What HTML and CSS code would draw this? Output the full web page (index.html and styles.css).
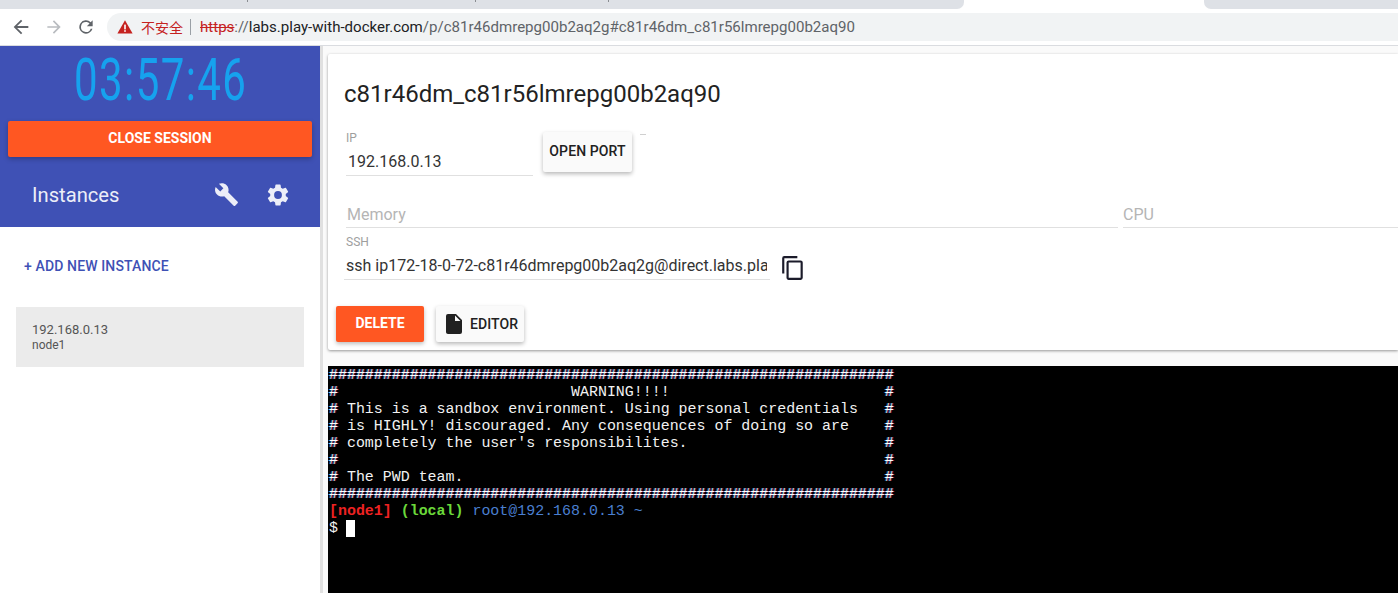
FILE: index.html
```html
<!DOCTYPE html>
<html lang="en">
<head>
<meta charset="utf-8">
<title>Play with Docker</title>
<link rel="stylesheet" href="styles.css">
</head>
<body>
<header class="chrome">
  <div class="tabstrip">
    <div class="tab-gap"></div>
    <div class="tab-active"></div>
    <div class="tab-next"></div>
  </div>
  <div class="toolbar">
    <svg class="nav" viewBox="0 0 24 24"><path fill="#5f6368" d="M20 11H7.800l5.600-5.600L12 4l-8 8 8 8 1.400-1.400L7.800 13H20z"/></svg>
    <svg class="nav" viewBox="0 0 24 24"><path fill="#b9bcc0" d="M4 11h12.200l-5.600-5.600L12 4l8 8-8 8-1.400-1.400 5.600-5.600H4z"/></svg>
    <svg class="nav" viewBox="0 0 24 24"><path fill="#5f6368" d="M17.650 6.350A8 8 0 1 0 19.730 14h-2.080A6 6 0 1 1 12 6c1.660 0 3.140.69 4.220 1.780L13 11h7V4z"/></svg>
    <div class="omnibox">
      <svg class="warn" viewBox="0 0 16 16"><path fill="#c5221f" d="M8 1.200 15.600 14.600H.4z"/><rect x="7.200" y="5.600" width="1.600" height="4.800" fill="#fff"/><rect x="7.200" y="11.200" width="1.600" height="1.600" fill="#fff"/></svg>
      <span class="insecure">不安全</span>
      <span class="sep"></span>
      <span class="url"><s class="scheme">https</s><span class="slashes">://</span>labs.play-with-docker.com<span class="path">/p/c81r46dmrepg00b2aq2g#c81r46dm_c81r56lmrepg00b2aq90</span></span>
    </div>
  </div>
</header>
<div class="app">
  <aside class="sidebar">
    <section class="panel">
      <div class="timer"><span class="timer-text">03:57:46</span></div>
      <button class="btn-close">CLOSE SESSION</button>
      <div class="instances-head">
        <span class="instances-title">Instances</span>
        <svg class="tool" viewBox="0 0 24 24"><path fill="#eceef8" d="M22.700 19l-9.100-9.100c.9-2.300.4-5-1.500-6.900-2-2-5-2.400-7.400-1.300L9 6 6 9 1.600 4.700C.4 7.100.9 10.100 2.900 12.100c1.900 1.900 4.600 2.400 6.900 1.500l9.100 9.100c.4.400 1 .4 1.400 0l2.300-2.300c.5-.4.500-1.100.1-1.400z"/></svg>
        <svg class="gear" viewBox="0 0 24 24"><path fill="#eceef8" d="M19.140 12.940c.04-.3.06-.61.06-.94 0-.32-.02-.64-.07-.94l2.030-1.580a.49.49 0 0 0 .12-.61l-1.920-3.320a.49.49 0 0 0-.59-.22l-2.390.96c-.5-.38-1.030-.7-1.620-.94l-.36-2.540a.48.48 0 0 0-.48-.41h-3.840a.47.47 0 0 0-.47.41l-.36 2.540c-.59.24-1.130.57-1.620.94l-2.390-.96a.48.48 0 0 0-.59.22L2.740 8.870a.47.47 0 0 0 .12.61l2.030 1.580c-.05.3-.09.63-.09.94s.02.64.07.94l-2.030 1.580a.49.49 0 0 0-.12.61l1.920 3.320c.12.22.37.29.59.22l2.390-.96c.5.38 1.030.7 1.620.94l.36 2.540c.05.24.24.41.48.41h3.840c.24 0 .44-.17.47-.41l.36-2.540c.59-.24 1.130-.56 1.620-.94l2.390.96c.22.08.47 0 .59-.22l1.920-3.320a.47.47 0 0 0-.12-.61l-2.010-1.580zM12 15.600A3.610 3.610 0 0 1 8.400 12 3.610 3.610 0 0 1 12 8.400a3.610 3.610 0 0 1 3.600 3.600 3.610 3.610 0 0 1-3.600 3.600z"/></svg>
      </div>
    </section>
    <div class="add-instance">+ ADD NEW INSTANCE</div>
    <div class="instance-item">
      <div class="instance-ip">192.168.0.13</div>
      <div>node1</div>
    </div>
  </aside>
  <main class="content">
    <div class="details">
      <section class="card">
        <h1 class="card-title">c81r46dm_c81r56lmrepg00b2aq90</h1>
        <div class="ip-row">
          <div class="field field-ip">
            <label class="field-label">IP</label>
            <div class="field-value">192.168.0.13</div>
          </div>
          <button class="btn-light btn-port">OPEN PORT</button>
          <span class="dash"></span>
        </div>
        <div class="stats-row">
          <div class="stat stat-mem">Memory</div>
          <div class="stat stat-cpu">CPU</div>
        </div>
        <div class="ssh-row">
          <div class="field field-ssh">
            <label class="field-label">SSH</label>
            <div class="field-value ssh-value">ssh ip172-18-0-72-c81r46dmrepg00b2aq2g@direct.labs.play-with-docker.com</div>
          </div>
          <svg class="copy" viewBox="0 0 24 24"><path fill="#1b1b2a" d="M16 1H4a2 2 0 0 0-2 2v14h2V3h12zm3 4H8a2 2 0 0 0-2 2v14c0 1.100.9 2 2 2h11a2 2 0 0 0 2-2V7a2 2 0 0 0-2-2zm0 16H8V7h11z"/></svg>
        </div>
        <div class="actions">
          <button class="btn-delete">DELETE</button>
          <button class="btn-light btn-editor">
            <svg class="file" viewBox="0 0 24 24"><path fill="#212121" d="M6 2a2 2 0 0 0-2 2v16c0 1.100.9 2 2 2h12a2 2 0 0 0 2-2V8l-6-6zm7 7V3.500L18.500 9z"/></svg>
            EDITOR
          </button>
        </div>
      </section>
    </div>
    <pre class="terminal"><span class="hash">###############################################################</span>
<span class="hash">#</span>                          WARNING!!!!                        <span class="hash">#</span>
<span class="hash">#</span> This is a sandbox environment. Using personal credentials   <span class="hash">#</span>
<span class="hash">#</span> is HIGHLY! discouraged. Any consequences of doing so are    <span class="hash">#</span>
<span class="hash">#</span> completely the user's responsibilites.                      <span class="hash">#</span>
<span class="hash">#</span>                                                             <span class="hash">#</span>
<span class="hash">#</span> The PWD team.                                               <span class="hash">#</span>
<span class="hash">###############################################################</span>
<span class="t-red">[node1]</span> <span class="t-green">(local)</span> <span class="t-blue">root@192.168.0.13 ~</span>
$ <span class="cursor"> </span></pre>
  </main>
</div>
</body>
</html>
```
FILE: styles.css
```css
* { box-sizing: border-box; }
html, body { margin: 0; height: 100%; }
body {
  width: 1398px;
  height: 593px;
  overflow: hidden;
  font-family: Roboto, "Noto Sans", sans-serif;
  background: #fafafa;
  display: flex;
  flex-direction: column;
}
button { font-family: inherit; border: 0; cursor: pointer; }

/* browser chrome */
.chrome { flex: none; height: 46px; background: #fff; border-bottom: 1px solid #dadce0; }
.tabstrip { height: 9px; display: flex; background: #fff; }
.tab-gap {
  width: 964px;
  border-bottom-right-radius: 7px;
  background:
    linear-gradient(#8a8d91, #8a8d91) 247px 0 / 1px 2px no-repeat,
    linear-gradient(#8a8d91, #8a8d91) 475px 0 / 1px 2px no-repeat,
    linear-gradient(#8a8d91, #8a8d91) 608px 0 / 1px 2px no-repeat,
    #dee1e6;
}
.tab-active { width: 240px; background: #fff; }
.tab-next { flex: 1; border-bottom-left-radius: 7px; background: #dee1e6; }
.toolbar { height: 36px; display: flex; align-items: center; padding-left: 10px; }
.nav { flex: none; }
.nav:nth-child(1) { width: 22px; height: 22px; margin-right: 12px; }
.nav:nth-child(2) { width: 20px; height: 20px; margin-right: 12px; }
.nav:nth-child(3) { width: 20px; height: 20px; margin-right: 10px; margin-left: 0; }
.omnibox {
  flex: 1;
  height: 28px;
  margin-left: 1px;
  background: #f1f3f4;
  border-radius: 14px 0 0 14px;
  display: flex;
  align-items: center;
  padding-left: 10px;
  font-size: 14px;
  color: #5f6368;
  white-space: nowrap;
}
.warn { width: 16px; height: 16px; flex: none; margin-right: 8px; }
.insecure { color: #c5221f; font-family: "Noto Sans CJK SC", sans-serif; font-size: 14px; }
.sep { width: 1px; height: 16px; background: #9aa0a6; margin: 0 9px 0 7px; }
.url { color: #202124; font-size: 15.05px; }
.scheme { color: #c5221f; }
.slashes, .path { color: #5f6368; }

/* layout */
.app { flex: 1; min-height: 0; display: flex; }
.sidebar { flex: none; width: 323px; background: #fff; border-right: 3px solid #e0e0e0; }
.panel { background: #3f51b5; height: 181px; padding: 0 8px; }
.timer { height: 75px; display: flex; justify-content: center; overflow: visible; }
.timer-text {
  display: inline-block;
  margin-left: 2px;
  font-size: 60px;
  line-height: 68px;
  font-weight: 400;
  color: #16a2ee;
  transform: scaleX(.7);
  transform-origin: center top;
  letter-spacing: 2px;
  white-space: nowrap;
}
.btn-close {
  display: block;
  width: 304px;
  height: 36px;
  padding: 0 0 2px;
  background: #ff5722;
  color: #fff;
  font-size: 14px;
  font-weight: 700;
  border-radius: 2px;
  box-shadow: 0 2px 5px rgba(0,0,0,.26);
}
.instances-head { display: flex; align-items: center; height: 75px; padding-left: 24px; }
.instances-title { flex: 1; color: #eceef8; font-size: 20.2px; }
.tool { width: 25px; height: 25px; margin-right: 26px; }
.gear { width: 26px; height: 26px; margin-right: 21px; }
.add-instance {
  padding: 31px 0 0 24px;
  height: 80px;
  font-size: 14px;
  font-weight: 500;
  letter-spacing: .13px;
  color: #3f51b5;
}
.instance-item {
  margin: 0 16px;
  height: 60px;
  padding: 15px 16px 0;
  background: #ebebeb;
  color: #555;
  font-size: 12px;
  line-height: 15px;
}
.instance-ip { font-size: 13px; line-height: 16px; }

/* main */
.content { flex: 1; min-width: 0; display: flex; flex-direction: column; padding-left: 5px; background: #fafafa; }
.details { flex: none; height: 320px; padding-top: 8px; }
.card {
  height: 296px;
  background: #fff;
  border-radius: 2px 0 0 2px;
  box-shadow: 0 1px 3px rgba(0,0,0,.4);
  padding: 24px 0 0 8px;
}
.card-title { margin: 0 0 0 8px; font-size: 24px; line-height: 32px; font-weight: 400; color: #222; }
.ip-row { display: flex; align-items: flex-start; margin-top: 21px; padding-left: 10px; height: 67px; }
.field-label { display: block; font-size: 12px; line-height: 14px; color: #9e9e9e; }
.field-ip { width: 187px; height: 45px; border-bottom: 1px solid #e0e0e0; }
.field-value { font-size: 16px; line-height: 22px; color: #333; padding: 6px 0 0 2px; white-space: nowrap; overflow: hidden; }
.btn-light {
  background: #fafafa;
  color: #212121;
  font-size: 14px;
  font-weight: 500;
  letter-spacing: .1px;
  border-radius: 2px;
  box-shadow: 0 2px 4px rgba(0,0,0,.28);
}
.btn-port { width: 89px; height: 40px; margin: 1px 0 0 10px; padding: 0 0 2px; }
.dash { width: 6px; height: 1px; background: #d0d0d0; margin: 3px 0 0 8px; }
.stats-row { display: flex; padding-left: 10px; height: 30px; }
.stat { height: 30px; border-bottom: 1px solid #e0e0e0; font-size: 16px; line-height: 26px; padding: 4px 0 0 1px; color: #b5b5b5; }
.stat-mem { width: 772px; }
.stat-cpu { flex: 1; margin-left: 5px; padding-left: 0; }
.ssh-row { display: flex; align-items: flex-start; padding-left: 8px; height: 78px; padding-top: 7px; }
.field-ssh { width: 426px; height: 45px; border-bottom: 1px solid #e0e0e0; padding-left: 2px; }
.ssh-value { padding-left: 0; margin-right: 3px; }
.copy { width: 26px; height: 26px; margin: 20px 0 0 10px; flex: none; }
.actions { display: flex; gap: 12px; }
.btn-delete {
  width: 88px;
  height: 36px;
  padding: 0 0 2px;
  background: #ff5722;
  color: #fff;
  font-size: 14px;
  font-weight: 700;
  border-radius: 2px;
  box-shadow: 0 2px 4px rgba(0,0,0,.26);
}
.btn-editor { width: 88px; height: 36px; display: flex; align-items: center; padding: 0 0 1px 6px; gap: 4px; }
.file { width: 24px; height: 24px; flex: none; }

/* terminal */
.terminal {
  flex: 1;
  margin: 0;
  padding: 1px 0 0 1px;
  background: #000;
  color: #f2f2f2;
  font-family: "Liberation Mono", monospace;
  font-size: 14.95px;
  line-height: 17px;
  overflow: hidden;
}
.hash { color: #fff; text-shadow: 1px 0 0 rgba(255,60,200,.5), -1px 0 0 rgba(40,170,255,.6); }
.t-red { color: #e22; font-weight: 700; }
.t-green { color: #6bd83a; font-weight: 700; }
.t-blue { color: #4a7fd0; }
.cursor { display: inline-block; width: 9px; height: 17px; margin-left: -1px; background: #fff; vertical-align: top; }
```
